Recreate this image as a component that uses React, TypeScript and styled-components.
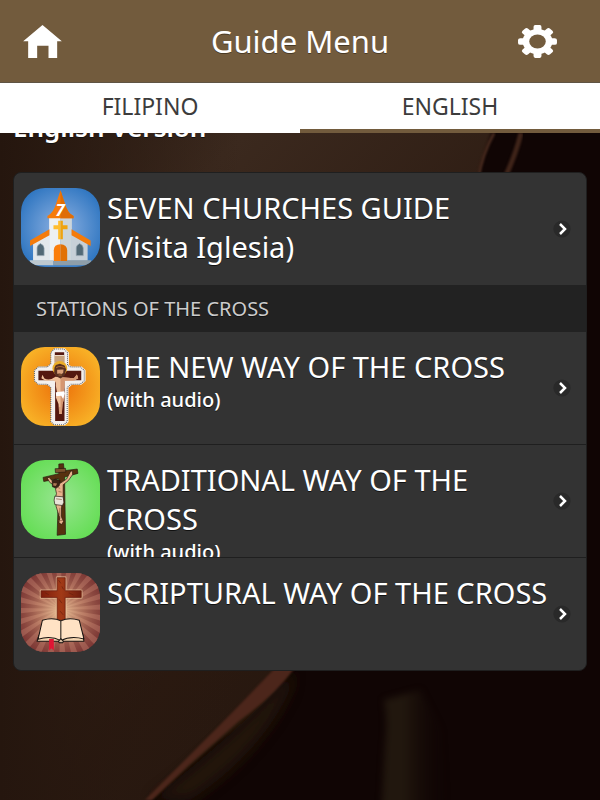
import React, { useState } from 'react';
import styled, { createGlobalStyle } from 'styled-components';

const GlobalStyle = createGlobalStyle`
  *, *::before, *::after { box-sizing: border-box; }
  body {
    margin: 0;
    background: #120705;
    font-family: "Noto Sans", "Open Sans", sans-serif;
    color: #fff;
  }
`;

const Page = styled.div`
  position: relative;
  isolation: isolate;
  display: flex;
  flex-direction: column;
  min-height: 100vh;
  overflow: hidden;
`;

const BackdropSvg = styled.svg`
  position: absolute;
  inset: 0;
  z-index: -1;
  width: 100%;
  height: 100%;
`;

const Header = styled.header`
  display: grid;
  grid-template-columns: 1fr auto 1fr;
  align-items: center;
  height: 83px;
  padding: 0 23px;
  background: #725b3d;
  border-bottom: 1px solid #5f5444;
`;

const Title = styled.h1`
  margin: 0;
  font-size: 31px;
  line-height: 40px;
  font-weight: 400;
  text-shadow: 0 1px 0 #4a3a25;
`;

const HomeLink = styled.a`
  display: flex;
  justify-self: start;
  color: #fff;
`;

const SettingsButton = styled.button`
  display: flex;
  justify-self: end;
  margin: 0 20px 0 0;
  padding: 0;
  border: 0;
  background: none;
  color: #fff;
  cursor: pointer;
`;

const Tabs = styled.nav`
  display: grid;
  grid-template-columns: 1fr 1fr;
  height: 50px;
  background: #fff;
`;

const Tab = styled.button<{ $active: boolean }>`
  padding: 0 0 4px;
  border: 0;
  background: #fff;
  box-shadow: ${(p) => (p.$active ? 'inset 0 -4px 0 #725b3d' : 'none')};
  color: #3c3c3c;
  font: 400 23px/46px "Noto Sans", "Open Sans", sans-serif;
  cursor: pointer;
`;

const Content = styled.main`
  flex: 1;
  padding: 0 13px 24px;
  overflow: hidden;
`;

const VersionHeading = styled.h2`
  margin: -22px 0 29px;
  font-size: 26px;
  line-height: 32px;
  font-weight: 600;
  text-shadow: 0 1px 0 #111;
`;

const Menu = styled.ul`
  margin: 0;
  padding: 0;
  list-style: none;
  border: 1px solid #1f1f1f;
  border-radius: 8px;
  overflow: hidden;
  background: #333;
`;

const Item = styled.li`
  & + & { border-top: 1px solid #1f1f1f; }
`;

const Divider = styled.li`
  padding: 0 22px;
  background: #222;
  color: #ccc;
  font-size: 20px;
  line-height: 47px;
  text-shadow: 0 1px 0 #111;

  & + ${Item} { border-top: 0; }
`;

const Entry = styled.a`
  display: flex;
  align-items: flex-start;
  height: 112px;
  padding: 15px 15px 0 7px;
  overflow: hidden;
  color: #fff;
  text-decoration: none;
  text-shadow: 0 1px 0 #111;
`;

const Tile = styled.svg`
  flex: none;
  width: 79px;
  height: 79px;
  border-radius: 24px;
  text-shadow: none;
`;

const Label = styled.span`
  flex: 1;
  min-width: 0;
  padding-left: 7px;
`;

const Name = styled.span`
  display: block;
  font-size: 29px;
  line-height: 39px;
  white-space: pre-line;
`;

const Note = styled.span`
  display: block;
  font-size: 20px;
  line-height: 28px;
  font-weight: 500;
`;

const Chevron = styled.svg`
  flex: none;
  align-self: center;
  width: 18px;
  height: 18px;
  margin-bottom: 15px;
`;

function HomeIcon() {
  return (
    <svg width="39" height="33" viewBox="69 76 116 99" aria-hidden="true">
      <path fill="currentColor" d="M127 76 185 125H171V175H145V138H111V175H84V125H69Z" />
    </svg>
  );
}

function GearIcon() {
  return (
    <svg width="39" height="33" viewBox="-59 -50 118 100" aria-hidden="true">
      <g transform="scale(1 .85)">
        {[0, 45, 90, 135].map((a) => (
          <rect key={a} x="-12" y="-59" width="24" height="118" rx="7" fill="currentColor" transform={`rotate(${a})`} />
        ))}
        <circle r="45" fill="currentColor" />
        <circle r="25" fill="#725b3d" />
      </g>
    </svg>
  );
}

function ChurchIcon() {
  return (
    <Tile viewBox="33 39 236 236" aria-hidden="true">
      <defs>
        <radialGradient id="sky" r=".65"><stop stopColor="#8fb2e2" /><stop offset="1" stopColor="#246fbd" /></radialGradient>
      </defs>
      <rect x="33" y="39" width="236" height="236" fill="url(#sky)" />
      <path fill="#e3e8ec" d="M69 202 118 170V256H69Z" />
      <path fill="#c7d0d8" d="M184 170 232 202V256H184Z" />
      <path fill="#edf1f3" d="M117 128H151V256H117Z" />
      <path fill="#ccd5da" d="M151 128H185V256H151Z" />
      <path fill="#f47b0b" d="M118 162 60 196V212L118 180ZM184 162 241 196V212L184 180Z" />
      <path fill="#f67b0a" d="M151 46 165 88Q172 113 190 123V129H112V123Q130 112 137 88Z" />
      <path fill="#df6d06" d="M151 46 165 88Q172 113 190 123V129H151Z" />
      <path fill="#ffbd2d" d="M144 137H151V192H144V162H130V150H144Z" />
      <path fill="#efa30e" d="M151 137H158V150H172V162H158V192H151Z" />
      <path fill="#fb7e0b" d="M131 257V225Q131 207 151 207V257Z" />
      <path fill="#e17106" d="M151 207Q171 208 171 226V257H151Z" />
      <path fill="#526976" stroke="#96a7b2" strokeWidth="2" d="M81 241V218Q81 210 91 205 102 210 102 219V241ZM198 241V218Q198 210 208 205 219 210 219 219V241Z" />
      <path fill="#bdc8cf" d="M59 255H130V270H59Z" />
      <path fill="#8e9ea9" d="M171 255H243V270H171ZM130 257H171V270H130Z" />
      <text x="150" y="122" textAnchor="middle" fill="#fff" fontFamily="Open Sans, sans-serif" fontWeight="700" fontStyle="italic" fontSize="50">7</text>
    </Tile>
  );
}

function NewWayIcon() {
  const cross = 'M134 43H163L174 54V92L184 97H213L224 107V138L212 148H184L173 158V260L163 269H134L124 260V158L113 148H86L75 138V107L86 97H113L124 87V54Z';
  return (
    <Tile viewBox="33 37 236 236" aria-hidden="true">
      <defs>
        <radialGradient id="amber" r=".6"><stop stopColor="#ec6f09" /><stop offset="1" stopColor="#f9b528" /></radialGradient>
      </defs>
      <rect x="33" y="37" width="236" height="236" fill="url(#amber)" />
      <path d={cross} fill="#f4f0ed" stroke="#f4f0ed" strokeWidth="4" strokeLinejoin="round" />
      <path d={cross} fill="none" stroke="#59616b" strokeWidth="3" strokeDasharray="3 3" transform="translate(-2 0)" />
      <path fill="#54180f" d="M134 53H162V108H213V136H163V258H135V136H85V108H134Z" />
      <path fill="#f7eee2" d="M133 61H163V86H133Z" />
      <path fill="#c7a27c" d="M133 63H163V84H133Z" />
      <circle cx="149" cy="101" r="22" fill="#eaae2a" />
      <path fill="#efc09a" d="M136 126Q119 139 103 131L97 120 94 130 106 138 129 137Q139 138 137 153L141 175 137 187 145 207 147 237H155L157 207 163 187 160 172Q164 157 163 138L192 137 204 130 200 119 191 130 163 128Z" />
      <path fill="#d59671" d="M151 127 163 128 191 130 200 119 204 130 192 137 163 138Q164 157 160 172L163 187 157 207 155 237H151Z" />
      <path fill="#583021" d="M133 99 137 91 149 87 163 92 168 104 163 123 151 131 139 125 132 115Z" />
      <path fill="#dca179" d="M141 105 160 104 159 115 154 118 149 116 141 117Z" />
      <path d="M138 99Q149 91 163 99M145 121H155" fill="none" stroke="#a06434" strokeWidth="3" />
      <path fill="#fff" d="M137 172 162 169 164 176 159 192 153 183 138 184Z" />
      <path d="M149 216V235" stroke="#bd7957" strokeWidth="2" />
    </Tile>
  );
}

function TraditionalIcon() {
  return (
    <Tile viewBox="33 39 236 236" aria-hidden="true">
      <defs>
        <radialGradient id="meadow" r=".6"><stop stopColor="#98e591" /><stop offset="1" stopColor="#63dd53" /></radialGradient>
      </defs>
      <rect x="33" y="39" width="236" height="236" fill="url(#meadow)" />
      <g stroke="#26180f" strokeWidth="2" strokeLinejoin="round">
        <path fill="#57310f" d="M146 51 160 50 162 71 201 66 203 79 163 90 166 261 141 264 146 95 101 103 99 91 146 80Z" />
        <path fill="#7c522e" d="M135 65 166 64 167 75 136 77Z" />
        <path fill="#e8b18b" d="M111 92 117 91 132 107 151 108 169 96 181 73 187 71 187 83 174 101 159 113 159 151 154 181 153 207 160 223 154 232 146 226 149 212 143 194 138 178 136 151 139 139 134 116 119 106Z" />
        <path fill="#e9e4d9" d="M134 147 159 149 161 165 157 175 134 172 132 159Z" />
        <path fill="#3d2115" d="M126 101 135 96 150 101 147 116 139 123 127 119Z" />
      </g>
      <path fill="#ad7755" d="M130 108 141 109 137 117 129 115Z" />
      <path d="M143 121 150 124M145 133 154 135M149 182 148 203M144 221 158 219M138 155 155 157" fill="none" stroke="#8a5b3d" strokeWidth="2" />
    </Tile>
  );
}

function ScripturalIcon() {
  return (
    <Tile viewBox="33 37 236 236" aria-hidden="true">
      <defs>
        <radialGradient id="glow" r=".6"><stop stopColor="#f3cda0" stopOpacity=".95" /><stop offset=".5" stopColor="#c78b6c" stopOpacity=".6" /><stop offset="1" stopColor="#7a302e" stopOpacity=".35" /></radialGradient>
        <linearGradient id="wood"><stop stopColor="#7e1d0c" /><stop offset=".5" stopColor="#a23a17" /><stop offset="1" stopColor="#6f1d0e" /></linearGradient>
      </defs>
      <rect x="33" y="37" width="236" height="236" fill="#7c3a37" />
      {Array.from({ length: 24 }, (_, i) => (
        <path key={i} d="M151 144 361 121V149Z" fill="#a9685c" transform={`rotate(${i * 15} 151 144)`} />
      ))}
      <rect x="33" y="37" width="236" height="236" fill="url(#glow)" />
      <path fill="none" stroke="#ffe2b0" strokeOpacity=".5" strokeWidth="8" strokeLinejoin="round" d="M141 51H165V90H213V110H165V178H141V110H93V90H141Z" />
      <path fill="url(#wood)" stroke="#65180d" strokeWidth="2" d="M141 51H165V90H213V110H165V178H141V110H93V90H141Z" />
      <path d="M145 58 152 68M155 77 160 86M105 96 116 102M176 96 190 103M147 116 155 127M150 151 159 162" fill="none" stroke="#68200f" strokeWidth="2" />
      <g stroke="#171210" strokeWidth="3" strokeLinejoin="round">
        <path fill="#f4d5b0" d="M86 223 81 241H145L152 245 159 241H221L218 222Z" />
        <path fill="#ffe2c4" d="M97 178Q129 168 152 180 176 168 207 178L221 234Q182 223 152 239 122 223 84 235Z" />
        <path fill="none" d="M152 180V239" />
        <path fill="#d7bda1" d="M145 241 152 233 160 241 158 245H147Z" />
      </g>
      <path fill="#df1534" d="M117 234H131V269L124 262 117 269Z" />
    </Tile>
  );
}

function Backdrop() {
  return (
    <BackdropSvg viewBox="0 0 600 800" preserveAspectRatio="xMidYMid slice" aria-hidden="true">
      <defs>
        <linearGradient id="wall" x1="0" y1="0" x2="0.8" y2="1">
          <stop stopColor="#291b12" /><stop offset=".3" stopColor="#3b291e" /><stop offset=".65" stopColor="#2a1910" /><stop offset="1" stopColor="#20150e" />
        </linearGradient>
        <linearGradient id="left"><stop stopColor="#25160e" /><stop offset=".4" stopColor="#2b1a11" stopOpacity="0" /></linearGradient>
        <linearGradient id="fold"><stop stopColor="#21170e" /><stop offset=".35" stopColor="#21170e" /><stop offset="1" stopColor="#100504" stopOpacity="0" /></linearGradient>
        <filter id="soft" x="-30%" y="-30%" width="160%" height="160%"><feGaussianBlur stdDeviation="7" /></filter>
        <filter id="edge" colorInterpolationFilters="sRGB"><feGaussianBlur stdDeviation="1" /></filter>
        <filter id="haze" x="-30%" width="160%" colorInterpolationFilters="sRGB"><feGaussianBlur stdDeviation="3" /></filter>
      </defs>
      <rect width="600" height="800" fill="url(#wall)" />
      <rect width="600" height="800" fill="url(#left)" />
      <path fill="#100504" d="M495 123Q482 154 477 180L330 560 292 669Q258 714 219 741L140 810H610V123Z" filter="url(#edge)" />
      <path fill="#291b10" opacity=".7" d="M292 669Q247 727 150 800H190Q260 754 290 690Z" filter="url(#soft)" />
      <path fill="#4c261b" d="M274 669Q231 714 199 746L145 800H152L189 765 239 721Q273 697 294 669Z" filter="url(#edge)" />
      <path fill="none" stroke="#472a1e" strokeWidth="3" d="M494 133Q482 154 478 180" filter="url(#edge)" />
      <path fill="none" stroke="#3f2419" strokeWidth="5" d="M521 133Q516 154 504 180" filter="url(#edge)" />
      <path fill="url(#fold)" d="M384 700Q388 720 385 745L381 820H447L441 730 420 690Z" filter="url(#haze)" />
    </BackdropSvg>
  );
}

const stations = [
  { name: 'THE NEW WAY OF THE CROSS', note: '(with audio)', Icon: NewWayIcon },
  { name: 'TRADITIONAL WAY OF THE CROSS', note: '(with audio)', Icon: TraditionalIcon },
  { name: 'SCRIPTURAL WAY OF THE CROSS', note: '', Icon: ScripturalIcon },
];

function MenuItem({ name, note, Icon }: { name: string; note?: string; Icon: React.ComponentType }) {
  return (
    <Item>
      <Entry href="#">
        <Icon />
        <Label>
          <Name>{name}</Name>
          {note && <Note>{note}</Note>}
        </Label>
        <Chevron viewBox="0 0 18 18" aria-hidden="true">
          <circle cx="9" cy="9" r="8.6" fill="#292929" />
          <path d="M7 4 12 9 7 14" fill="none" stroke="#fff" strokeWidth="2.5" />
        </Chevron>
      </Entry>
    </Item>
  );
}

export default function App() {
  const [language, setLanguage] = useState('ENGLISH');
  return (
    <Page>
      <GlobalStyle />
      <Backdrop />
      <Header>
        <HomeLink href="#" aria-label="Home"><HomeIcon /></HomeLink>
        <Title>Guide Menu</Title>
        <SettingsButton type="button" aria-label="Settings"><GearIcon /></SettingsButton>
      </Header>
      <Tabs aria-label="Language">
        {['FILIPINO', 'ENGLISH'].map((tab) => (
          <Tab key={tab} type="button" $active={tab === language} aria-pressed={tab === language} onClick={() => setLanguage(tab)}>
            {tab}
          </Tab>
        ))}
      </Tabs>
      <Content>
        <VersionHeading>English Version</VersionHeading>
        <Menu>
          <MenuItem name={'SEVEN CHURCHES GUIDE\n(Visita Iglesia)'} Icon={ChurchIcon} />
          <Divider>STATIONS OF THE CROSS</Divider>
          {stations.map((s) => <MenuItem key={s.name} {...s} />)}
        </Menu>
      </Content>
    </Page>
  );
}
